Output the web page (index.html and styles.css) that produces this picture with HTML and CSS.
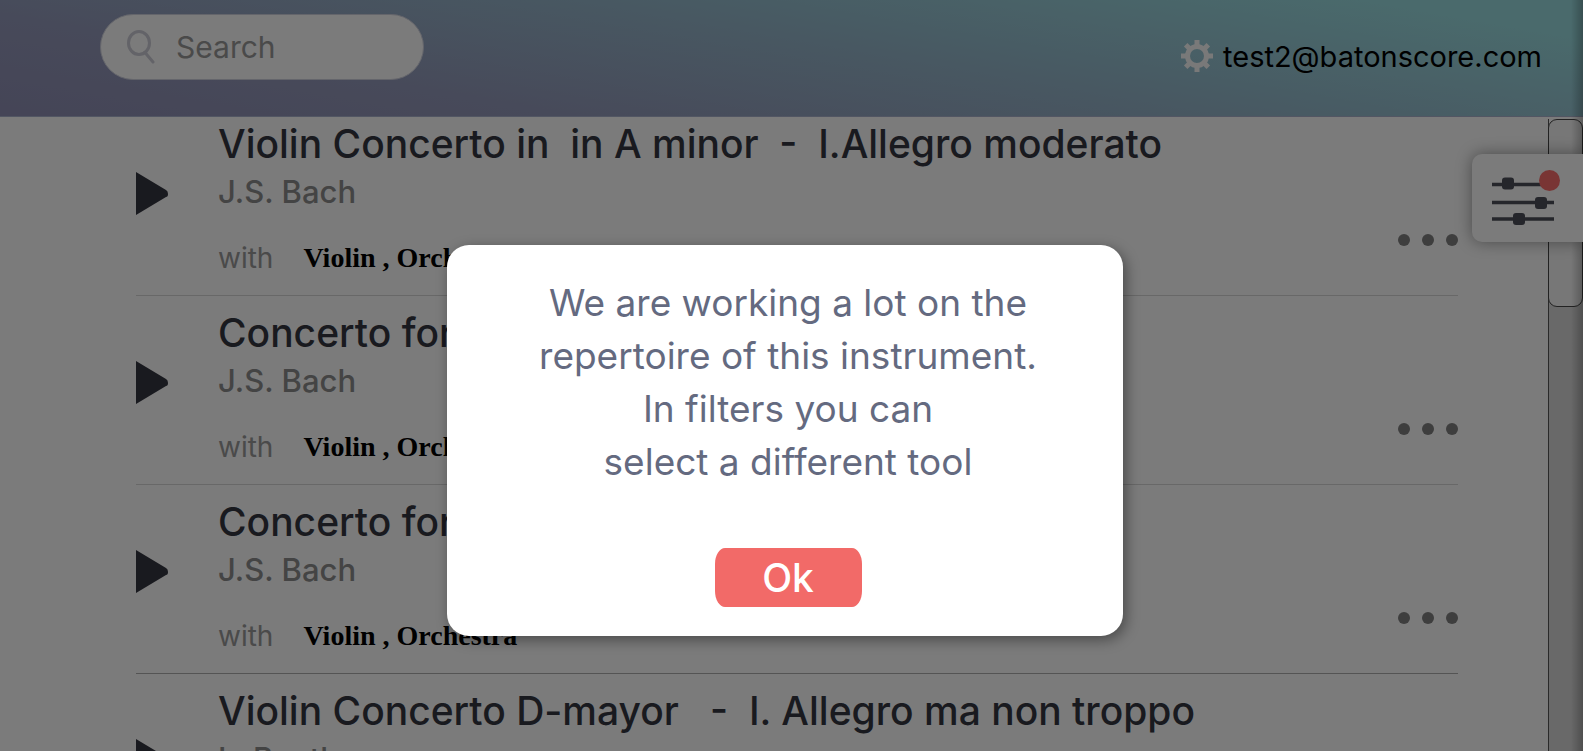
FILE: index.html
```html
<!DOCTYPE html>
<html lang="en">
<head>
<meta charset="utf-8">
<title>Baton Score</title>
<link rel="stylesheet" href="styles.css">
</head>
<body>
<header class="topbar">
  <label class="search">
    <svg class="search-icon" viewBox="0 0 28 34" aria-hidden="true"><ellipse cx="12" cy="13" rx="10.500" ry="11.500"/><path d="M18 22.500 26 32"/></svg>
    <input class="search-input" type="search" placeholder="Search" aria-label="Search">
  </label>
  <a class="account" href="#">
    <svg class="gear" viewBox="0 0 32 32" aria-hidden="true"><circle cx="16" cy="16" r="9.500"/><path d="M16 0v6M16 26v6M0 16h6M26 16h6M4.700 4.700l4 4M23.300 23.300l4 4M27.300 4.700l-4 4M8.700 23.300l-4 4"/></svg>
    <span>test2@batonscore.com</span>
  </a>
</header>
<div class="content">
  <main class="list">
    <article class="piece first">
      <button class="play" aria-label="Play"><svg viewBox="0 0 32 44"><path d="M0 0 30 18Q32 19 32 22T30 25L0 43Z"/></svg></button>
      <div class="info">
        <h2 class="title">Violin Concerto in  in A minor  -  I.Allegro moderato</h2>
        <p class="composer">J.S. Bach</p>
        <p class="with">with <strong class="parts">Violin , Orchestra</strong></p>
      </div>
      <button class="more" aria-label="More"><i></i><i></i><i></i></button>
    </article>
    <article class="piece">
      <button class="play" aria-label="Play"><svg viewBox="0 0 32 44"><path d="M0 0 30 18Q32 19 32 22T30 25L0 43Z"/></svg></button>
      <div class="info">
        <h2 class="title">Concerto for</h2>
        <p class="composer">J.S. Bach</p>
        <p class="with">with <strong class="parts">Violin , Orchestra</strong></p>
      </div>
      <button class="more" aria-label="More"><i></i><i></i><i></i></button>
    </article>
    <article class="piece strong">
      <button class="play" aria-label="Play"><svg viewBox="0 0 32 44"><path d="M0 0 30 18Q32 19 32 22T30 25L0 43Z"/></svg></button>
      <div class="info">
        <h2 class="title">Concerto for</h2>
        <p class="composer">J.S. Bach</p>
        <p class="with">with <strong class="parts">Violin , Orchestra</strong></p>
      </div>
      <button class="more" aria-label="More"><i></i><i></i><i></i></button>
    </article>
    <article class="piece">
      <button class="play" aria-label="Play"><svg viewBox="0 0 32 44"><path d="M0 0 30 18Q32 19 32 22T30 25L0 43Z"/></svg></button>
      <div class="info">
        <h2 class="title">Violin Concerto D-mayor   -  I. Allegro ma non troppo</h2>
        <p class="composer">L. Beethoven</p>
      </div>
    </article>
  </main>
  <div class="track"><div class="thumb"></div></div>
</div>
<div class="edge"></div>
<button class="filters" aria-label="Filters">
  <svg viewBox="0 0 72 56" aria-hidden="true">
    <path class="rail" d="M0 14.500H60M0 32.500H62M0 49H62"/>
    <rect x="10" y="7.500" width="12" height="12" rx="3"/><rect x="43" y="27" width="12" height="12" rx="3"/><rect x="21" y="43" width="12" height="12" rx="3"/>
    <circle class="dot" cx="57.500" cy="10.500" r="10.500"/>
  </svg>
</button>
<div class="overlay">
  <div class="dialog" role="dialog" aria-modal="true">
    <p class="message">We are working a lot on the<br>repertoire of this instrument.<br>In filters you can<br>select a different tool</p>
    <button class="ok">Ok</button>
  </div>
</div>
</body>
</html>
```
FILE: styles.css
```css
* { box-sizing: border-box; }
body {
  margin: 0;
  height: 100vh;
  overflow: hidden;
  display: flex;
  flex-direction: column;
  background: #f6f6f6;
  font-family: Inter, "Open Sans", sans-serif;
}
button { border: 0; padding: 0; background: none; font: inherit; }
h2, p { margin: 0; font-weight: 400; }
svg { display: block; }

.topbar {
  display: flex;
  flex: none;
  justify-content: space-between;
  align-items: flex-start;
  height: 117px;
  padding: 14px 41px 0 100px;
  border-bottom: 1px solid #a4adc6;
  background: linear-gradient(10deg, #8a8aae, #8f94b4 25%, #90b0c4 55%, #94d4d8 90%);
}
.search {
  display: flex;
  align-items: center;
  gap: 21px;
  width: 324px;
  height: 66px;
  padding: 0 27px 0 26px;
  border: 1px solid #c8cad6;
  border-radius: 33px;
  background: #f6f6f6;
}
.search-icon { width: 28px; height: 34px; flex: none; fill: none; stroke: #c6c6d0; stroke-width: 3; stroke-linecap: round; }
.search-input { flex: 1; min-width: 0; border: 0; padding: 0; background: none; font: 30px Inter, sans-serif; outline: 0; }
.search-input::placeholder { color: #949494; }
.account { display: flex; align-items: center; gap: 10px; height: 34px; margin-top: 25px; color: #000; font-size: 29px; text-decoration: none; }
.gear { width: 32px; height: 32px; fill: none; stroke: #f2f2f2; stroke-width: 5; }

.content { display: flex; flex: 1; min-height: 0; }
.list { flex: 1; min-width: 0; overflow: hidden; padding: 0 90px 0 136px; }
.piece {
  display: flex;
  align-items: flex-start;
  height: 189px;
  padding-top: 13px;
  border-bottom: 1px solid #d0d0d0;
}
.first { height: 179px; padding-top: 3px; }
.strong { border-color: #a8a8a8; }
.play { width: 33px; margin-top: 52px; }
.play svg { width: 32px; height: 44px; fill: #32343e; }
.info { flex: 1; padding-left: 49px; }
.title { font-size: 39px; line-height: 48px; font-weight: 500; white-space: pre; color: #32343e; }
.composer { font-size: 31px; line-height: 48px; font-weight: 500; color: #888; }
.with { padding-top: 21px; font-size: 28px; line-height: 42px; color: #949494; display: flex; gap: 30px; }
.parts { font: 700 28px/42px "Liberation Serif", serif; color: #000; }
.more { display: flex; gap: 12px; margin-top: 114px; }
.more i { width: 12px; height: 12px; border-radius: 50%; background: #7c7c7c; }

.track { flex: none; width: 35px; margin-top: 2px; border-left: 1px solid #555; background: linear-gradient(#f6f6f6 180px, #d2d2d2 180px); }
.thumb { height: 188px; margin-left: -1px; border: 1px solid #444; border-radius: 9px; background: #eee; }
.edge { position: absolute; top: 0; right: 0; width: 12px; height: 100%; background: linear-gradient(90deg, transparent, rgba(0,0,0,.25)); }

.filters { position: absolute; top: 154px; right: 0; height: 88px; width: 111px; padding: 0 0 0 20px; border-radius: 10px 0 0 10px; background: #f6f6f6; box-shadow: 0 0 16px rgba(0,0,0,.4); }
.filters svg { width: 72px; height: 56px; fill: #4a4c56; }
.filters .rail { stroke: #4a4c56; stroke-width: 3.500; }
.filters .dot { fill: #f26a68; }

.overlay { position: absolute; inset: 0; display: flex; align-items: center; justify-content: center; padding-top: 130px; padding-right: 13px; background: rgba(0,0,0,.5); }
.dialog { display: flex; flex-direction: column; align-items: center; width: 676px; padding: 31px 0 29px 6px; border-radius: 22px; background: #fff; box-shadow: 3px 4px 14px rgba(0,0,0,.4); }
.message { font-size: 37px; line-height: 53px; text-align: center; color: #646a80; }
.ok { width: 147px; height: 59px; margin-top: 60px; border-radius: 10px / 16px; background: #f26a68; color: #fff; font-size: 39px; font-weight: 500; }
```
